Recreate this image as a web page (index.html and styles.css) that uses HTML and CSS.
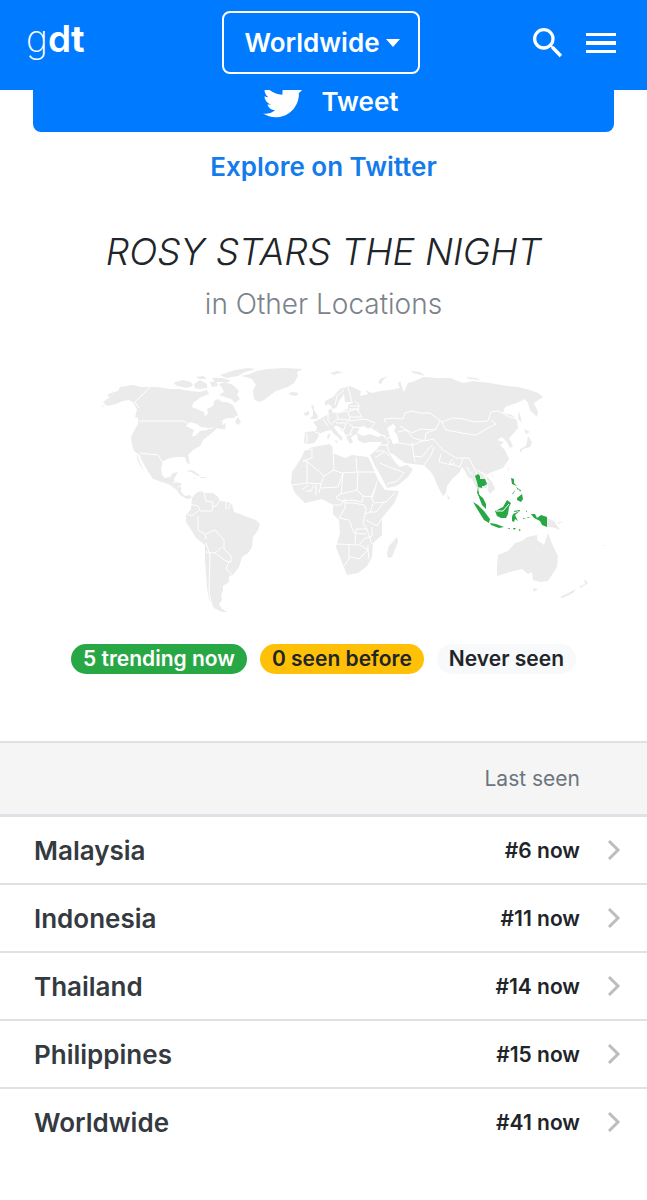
FILE: index.html
```
<!DOCTYPE html>
<html lang="en">
  <head>
    <meta charset="UTF-8" />
    <meta name="viewport" content="width=device-width, initial-scale=1.0" />
    <title>ROSY STARS THE NIGHT - gdt</title>
    <link rel="stylesheet" href="styles.css">
  </head>
  <body>
    <header class="navbar">
      <a class="brand" href="#"><span class="brand-thin">g</span><span class="brand-semi">d</span>t</a>
      <button class="location-btn" type="button">Worldwide<span class="caret"></span></button>
      <div class="nav-icons">
        <button class="icon-btn" type="button" aria-label="Search">
          <svg width="40" height="40" viewBox="0 0 24 24"><path d="M15.5 14h-.79l-.28-.27A6.47 6.47 0 0 0 16 9.5 6.5 6.5 0 1 0 9.5 16c1.61 0 3.09-.59 4.23-1.57l.27.28v.79l5 4.99L20.49 19l-4.99-5zm-6 0C7.01 14 5 11.99 5 9.5S7.01 5 9.5 5 14 7.01 14 9.5 11.99 14 9.5 14z" /></svg>
        </button>
        <button class="icon-btn" type="button" aria-label="Menu">
          <svg width="30" height="40" viewBox="0 0 30 40"><path d="M0 10h30v3H0zM0 18h30v4H0zM0 27h30v3H0z" /></svg>
        </button>
      </div>
    </header>

    <main>
      <section class="actions">
        <a class="tweet-btn" href="#">
          <svg width="40" height="40" viewBox="0 0 24 24"><path d="M23.95 4.57a10 10 0 0 1-2.82.77 4.96 4.96 0 0 0 2.16-2.72c-.95.55-2 .95-3.13 1.18a4.92 4.92 0 0 0-8.38 4.48C7.69 8.1 4.07 6.13 1.64 3.16a4.92 4.92 0 0 0 1.52 6.57 4.9 4.9 0 0 1-2.23-.61v.06c0 2.38 1.7 4.37 3.95 4.82a5 5 0 0 1-2.21.09 4.94 4.94 0 0 0 4.6 3.42A9.87 9.87 0 0 1 0 19.54a14 14 0 0 0 7.56 2.21c9.05 0 14-7.5 14-13.98 0-.21 0-.42-.02-.63a9.94 9.94 0 0 0 2.46-2.55z" /></svg>
          Tweet
        </a>
        <a class="explore-link" href="#">Explore on Twitter</a>
      </section>

      <section class="trend">
        <h1>ROSY STARS THE NIGHT</h1>
        <p class="subtitle">in Other Locations</p>

        <svg class="world-map" viewBox="33 360 581 260" role="img" aria-label="World map">
          <g class="land">
            <!-- North America -->
            <path d="M103 402L110 397 107 395 111 393 118 391 120 387 133 385 141 387 150 387 157 387 170 389 180 389 184 390 190 391 200 392 207 390 209 394 201 397 193 403 192 407 199 410 204 412 205 417 208 413 207 409 213 406 214 401 218 399 222 402 227 402 233 405 235 409 238 415 233 418 227 418 219 422 223 421 222 425 227 423 221 429 217 428 213 432 208 436 203 440 200 446 193 450 188 455 190 464 187 463 185 457 178 457 170 458 163 461 161 469 162 475 165 478 170 477 173 473 178 472 174 479 175 482 181 483 181 492 185 496 190 495 192 498 187 499 180 495 177 490 170 485 162 482 153 479 149 473 145 466 141 459 140 455 134 451 132 445 131 437 135 429 138 424 138 418 135 417 137 410 134 403 129 400 123 401 116 404 107 406z" />
            <path d="M137 453L139 460 144 472 141 467 137 459z" />
            <path d="M100 407L104 405 105 406zM218 415L221 413" />
            <!-- Arctic islands -->
            <path d="M175 382L183 380 191 382 193 386 186 388 178 386 174 384zM194 384L200 380 207 384 207 388 200 389 195 388zM196 377L203 376 207 379 199 379zM210 382L216 381 218 386 212 387zM219 384L225 382 233 385 239 391 237 395 240 399 235 403 231 399 225 397 219 395 224 392 222 388zM220 375L235 370 248 368 256 369 245 372 238 376 226 378zM212 378L222 378 230 380 229 382 215 382zM235 422L238 417 241 422 238 425zM219 429L226 425 225 429z" />
            <!-- Greenland -->
            <path d="M241 376L250 374 256 371 268 369 285 368 303 369 297 372 298 376 294 383 288 387 276 391 269 396 264 400 259 402 254 399 253 390 256 385 252 379 246 377z" />
            <!-- Caribbean -->
            <path d="M186 471L192 470 200 475 198 476 191 472zM200 477L206 477 205 478 200 478zM193 478L196 478 194 479z" />
            <!-- South America -->
            <path d="M192 498L195 494 200 491 206 493 213 493 218 497 220 501 228 502 232 504 234 512 240 514 247 517 256 520 260 524 258 530 253 537 252 547 248 553 242 557 239 567 233 575 229 576 229 582 223 586 223 591 221 595 222 600 219 604 222 609 227 612 222 612 214 608 209 599 207 588 206 575 205 560 205 545 196 538 190 528 186 522 186 515 191 509z" />
            <!-- Europe and Asia -->
            <path d="M305 432L304 443 308 444 314 443 318 438 319 434 326 431 331 430 334 434 338 437 341 441 343 438 339 434 335 429 334 426 338 426 341 430 345 434 347 439 350 444 353 442 351 437 357 434 358 440 363 443 372 442 382 442 377 449 370 455 375 466 381 476 387 488 397 486 408 477 413 469 407 465 400 467 395 462 389 453 393 454 399 459 405 463 413 464 424 465 430 471 433 475 438 487 443 496 446 493 447 486 452 479 459 473 462 467 465 471 468 477 472 479 477 489 486 488 490 494 495 489 492 482 486 475 492 472 503 468 509 459 505 450 500 445 504 442 497 440 502 437 507 442 510 448 513 446 509 438 514 433 518 428 517 420 512 415 503 413 505 407 517 403 525 399 528 403 530 410 537 417 538 412 534 403 543 397 538 393 530 390 518 387 507 386 490 383 473 381 463 383 450 378 438 378 423 377 415 381 408 383 404 392 400 381 398 384 400 388 390 390 380 391 372 393 365 390 368 394 360 396 361 391 350 386 340 389 333 397 325 401 325 406 329 404 333 409 337 407 339 401 344 394 345 402 354 402 348 405 348 409 340 412 333 413 331 408 328 411 329 414 325 416 320 419 313 422 317 427 316 431z" />
            <!-- European islands -->
            <path d="M311 405L314 406 314 410 318 416 317 419 310 419 313 415 313 411zM304 413L309 411 309 415 305 416zM289 393L293 392 299 393 296 396 290 395zM330 373L337 371 343 372 334 375zM378 383L380 379 388 376 383 380 381 384zM334 440L338 441 337 443zM328 434L330 434 329 439 327 438zM411 371L420 372 425 376 413 373zM466 377L476 378 481 380 469 379z" />
            <!-- Africa -->
            <path d="M305 450L313 447 330 444 333 448 333 453 345 458 352 455 368 457 372 465 378 480 385 490 399 491 395 502 382 518 382 535 373 543 372 557 367 566 358 573 347 575 343 565 336 547 340 533 339 520 333 514 333 505 322 499 305 503 295 493 291 483 292 472 300 460z" />
            <path d="M397 537L398 542 392 557 388 558 387 553 389 546z" />
            <!-- Oceania -->
            <path d="M498 555L508 551 515 543 522 541 527 537 537 535 537 540 544 545 548 533 552 544 558 556 557 567 548 581 540 582 533 580 532 572 528 574 522 569 510 572 497 576 497 567zM533 588L538 589 534 592zM560 597L576 589 573 593 563 598zM579 587L585 584 584 579 588 583 581 588zM547 518L554 521 560 530 552 527 547 527zM557 523L563 521 559 524zM602 545L605 545 604 546z" />
            <!-- Japan, Sakhalin, Taiwan and Sri Lanka -->
            <path d="M524 429L530 432 526 434zM528 436L532 442 530 447 523 449 520 453 520 449 526 446zM508 467L509 469 508 472zM447 494L450 498 448 500zM519 411L522 423 518 419zM492 475L494 476 492 477z" />
          </g>
          <g class="water">
            <path d="M357 433L360 427 365 426 367 429 371 428 376 431 382 435 378 437 370 434 363 436z" />
            <path d="M387 428L393 424 396 427 394 431 397 435 399 443 393 444 390 437z" />
            <path d="M186 426L190 422 197 424 201 427 208 428 207 430 200 431 195 436 192 436 194 430z" />
          </g>
          <g class="borders">
            <!-- Americas -->
            <path d="M150 387l-15 15 4 6M139 421h45l5 4 10 5 14-2M140 453l18 2 5 8M173 483l5-2M178 487l4-1M204 492l2 9 7 1-1 9-12 0-2-5-9-2M220 500l-4 6-4 1M226 502v7M231 503l-3 6M187 514l5 2 6-5M198 516l0 14 7 4 1 5M206 534l9-4 9 10 0 9 7 7M206 552l9 1 7-6M206 543l4 12-1 38 3 12M215 553l11 8 5 1 0-6M229 562l-3 7 6 5" />
            <!-- Europe -->
            <path d="M307 433v10M315 432l6 2M323 419l5 7M328 414v7l4 4M337 413l1 6M338 419l-6 4M337 413l11-2 2 9-12-1M349 411l8-2 5 8-12 0M350 420l-4 3-10 0M350 421l15-2 10 4-5 6-17-2-5-4M353 427l-3 7M346 423l-2 7-7-3M342 429l3 7 7-2M335 405l2-9 7-6M352 402l-4-15M355 401l4 4-1 6M350 406h8M349 409h9M372 434l14 2M383 435l6 7-3 4M392 437l-5 1" />
            <!-- Middle East and Asia -->
            <path d="M386 423l-2-4 9-1 10 1 2-6 7-2 8 2 10 0 12 9 10-4 12 1 10 3 14-1 3-9 7-1 12 6 8 3 3 12M441 421l5 9 16 3 14 2 12-7 8-4-5-4M440 421l-5 9-15-1-8 4-12-7M398 432l8-2 7 8 11 3 10-2M434 430l-8 3-1 7M433 439l10 11 13 8 13 0 4 8M441 454l-2 8 13 3 3-3M453 459l-4 4 11 4 3-9M412 442l1 9 2 11M424 440l-11 5M413 456l9 1 8-10 3-2M434 447l-3 8-7 10M387 444l2 9 6 5M399 443l13 2M378 445l9 0M376 451l8 0 5 5M375 458l9-6M387 484l10-3 7-8-6-3-7-2-11-5M467 467l3 6 3 1M473 466l4 8M477 470l9 5 1 7M482 472l3 5 4 6M488 485l-1 5" />
            <!-- Africa -->
            <path d="M305 450l7-1 0 9-9 3M303 461h4v22l-15 2M307 461l17 15 10-6-1-22M333 470l9 3 16-1M356 457l1 15 20 0M324 476l-3 8-14-1M308 485l-6 5M314 485l-3 6-5 0M316 485l0 10M321 484l-2 9M321 488l17-1 5-14M343 473l-2 21-5 3M341 494l16-4 1-18M357 490l6 6 10 1 4-16M375 488l-4 9 3 6 12-1 9-9M363 496l-1 6-10-2-10 1-6-3M333 505l8 0 4-6 0 9-6 10M345 503l9 0 10 2 2 4-3 14 4 6-11 0-1 15M339 518l10 2 5 13 12 1M366 520l11 6 5-8M373 504l-3 8-5 2M370 512h6l8-10M337 544l22 1 5-6 8-3 0-9M349 545v14l-5 7M350 557l9 2 9-9 0-5M360 545l8 5 1 9M367 529l3 10 2 5" />
          </g>
          <g class="trending">
            <!-- Thailand -->
            <path d="M475 476L478 474 480 476 480 479 485 479 487 484 484 486 482 486 482 488 478 487 477 482zM478 487L479 494 481 497 479 496 477 493z" />
            <!-- Malaysia and Indonesia -->
            <path d="M478 494L483 498 486 504 486 509 482 505 480 500zM473 502L478 505 484 511 490 519 489 523 484 520 479 512zM490 523L496 524 504 527 499 528 491 525zM495 511L503 507 507 500 511 503 509 507 508 514 506 518 501 518 497 516z" />
            <path d="M512 517L513 514 520 511 515 515 518 521 515 519 514 522 512 521zM514 511L520 510 520 511 514 512zM526 510L527 512 526 512zM523 518L526 518 523 519zM527 517L530 517 528 518zM507 528L510 528 510 529zM513 528L516 528 514 530zM519 529L521 530 519 531zM531 514L535 514 537 518 541 515 547 517 547 527 542 525 540 521 534 518z" />
            <!-- Philippines -->
            <path d="M511 478L514 479 514 483 517 486 512 484zM516 487L519 489 518 490zM512 494L516 489 513 494zM519 489L521 490 520 492zM517 498L522 494 523 499 521 502 517 500z" />
          </g>
          <path class="borders" d="M496 511L503 511 509 504" />
        </svg>

        <div class="badges">
          <span class="badge badge-success">5 trending now</span>
          <span class="badge badge-warning">0 seen before</span>
          <span class="badge badge-light">Never seen</span>
        </div>
      </section>

      <table class="locations">
        <thead>
          <tr>
            <th></th>
            <th class="seen">Last seen</th>
            <th class="arrow"></th>
          </tr>
        </thead>
        <tbody>
          <tr>
            <td><a href="#">Malaysia</a></td>
            <td class="seen">#6 now</td>
            <td class="arrow"><svg width="14" height="22" viewBox="0 0 14 22"><path d="M2 2l9 9-9 9" /></svg></td>
          </tr>
          <tr>
            <td><a href="#">Indonesia</a></td>
            <td class="seen">#11 now</td>
            <td class="arrow"><svg width="14" height="22" viewBox="0 0 14 22"><path d="M2 2l9 9-9 9" /></svg></td>
          </tr>
          <tr>
            <td><a href="#">Thailand</a></td>
            <td class="seen">#14 now</td>
            <td class="arrow"><svg width="14" height="22" viewBox="0 0 14 22"><path d="M2 2l9 9-9 9" /></svg></td>
          </tr>
          <tr>
            <td><a href="#">Philippines</a></td>
            <td class="seen">#15 now</td>
            <td class="arrow"><svg width="14" height="22" viewBox="0 0 14 22"><path d="M2 2l9 9-9 9" /></svg></td>
          </tr>
          <tr>
            <td><a href="#">Worldwide</a></td>
            <td class="seen">#41 now</td>
            <td class="arrow"><svg width="14" height="22" viewBox="0 0 14 22"><path d="M2 2l9 9-9 9" /></svg></td>
          </tr>
        </tbody>
      </table>
    </main>
  </body>
</html>
```
FILE: styles.css
```
* {
  margin: 0;
  padding: 0;
  box-sizing: border-box;
}

body {
  background-color: #fff;
  color: #212529;
  font-family: Inter, "Liberation Sans", sans-serif;
}

a {
  color: inherit;
  text-decoration: none;
}

button {
  font-family: inherit;
  color: inherit;
  background: none;
  border: none;
  cursor: pointer;
}

svg {
  display: block;
}

.navbar {
  position: fixed;
  top: 0;
  left: 0;
  right: 0;
  z-index: 10;
  display: grid;
  grid-template-columns: 1fr auto 1fr;
  align-items: center;
  height: 90px;
  padding: 0 31px 5px 26px;
  background-color: #007bff;
  color: #fff;
}

.brand {
  padding-bottom: 8px;
  font-size: 37px;
  line-height: 44px;
  font-weight: 700;
}

.brand-thin {
  font-weight: 200;
}

.brand-semi {
  font-weight: 600;
}

.location-btn {
  display: flex;
  align-items: center;
  gap: 6px;
  height: 63px;
  padding: 0 18px 0 20px;
  border: 2px solid #fff;
  border-radius: 8px;
  font-size: 26px;
  font-weight: 600;
}

.caret {
  border-top: 8px solid #fff;
  border-left: 7px solid transparent;
  border-right: 7px solid transparent;
}

.nav-icons {
  display: flex;
  justify-content: flex-end;
  gap: 18px;
}

.icon-btn svg {
  fill: #fff;
}

main {
  padding-top: 70px;
}

.actions {
  padding: 0 33px;
}

.tweet-btn {
  display: flex;
  justify-content: center;
  align-items: center;
  gap: 19px;
  height: 62px;
  padding-left: 14px;
  border-radius: 8px;
  background-color: #007bff;
  color: #fff;
  font-size: 26px;
  font-weight: 600;
}

.tweet-btn svg {
  fill: #fff;
}

.explore-link {
  display: block;
  padding: 19px 0 18px;
  color: #147bea;
  font-size: 26px;
  line-height: 32px;
  font-weight: 600;
  text-align: center;
}

.trend {
  padding: 27px 33px 67px;
  text-align: center;
}

h1 {
  font-size: 37px;
  line-height: 48px;
  font-style: italic;
  font-weight: 300;
}

.subtitle {
  margin-top: 8px;
  color: #7c838a;
  font-size: 28px;
  line-height: 40px;
  font-weight: 300;
}

.world-map {
  width: 100%;
  margin: 36px 0 24px;
}

.land {
  fill: #ebebeb;
}

.water {
  fill: #fff;
}

.borders {
  fill: none;
  stroke: #fff;
  stroke-width: 1;
  stroke-linejoin: round;
}

.trending {
  fill: #28a745;
}

.badges {
  display: flex;
  justify-content: center;
  gap: 13px;
}

.badge {
  padding: 0 12px;
  border-radius: 15px;
  font-size: 21px;
  line-height: 30px;
  font-weight: 600;
}

.badge-success {
  background-color: #28a745;
  color: #fff;
}

.badge-warning {
  background-color: #ffc107;
}

.badge-light {
  background-color: #f8f9fa;
}

.locations {
  width: 100%;
  border-collapse: separate;
  border-spacing: 0;
}

.locations th {
  height: 76px;
  border-top: 2px solid #dee2e6;
  border-bottom: 3px solid #dee2e6;
  background-color: #f5f5f5;
  color: #6c757d;
  font-size: 21px;
  font-weight: 400;
}

.locations td {
  height: 68px;
  border-bottom: 2px solid #dee2e6;
  color: #343a40;
  font-size: 26px;
  font-weight: 600;
}

.locations td:first-child {
  padding-left: 34px;
}

.locations tr:last-child td {
  border-bottom-color: transparent;
}

.locations .seen {
  text-align: right;
}

.locations td.seen {
  color: #212529;
  font-size: 21px;
}

.locations .arrow {
  width: 67px;
  padding-left: 27px;
}

.arrow svg {
  fill: none;
  stroke: #bdbdbd;
  stroke-width: 3;
}
```
